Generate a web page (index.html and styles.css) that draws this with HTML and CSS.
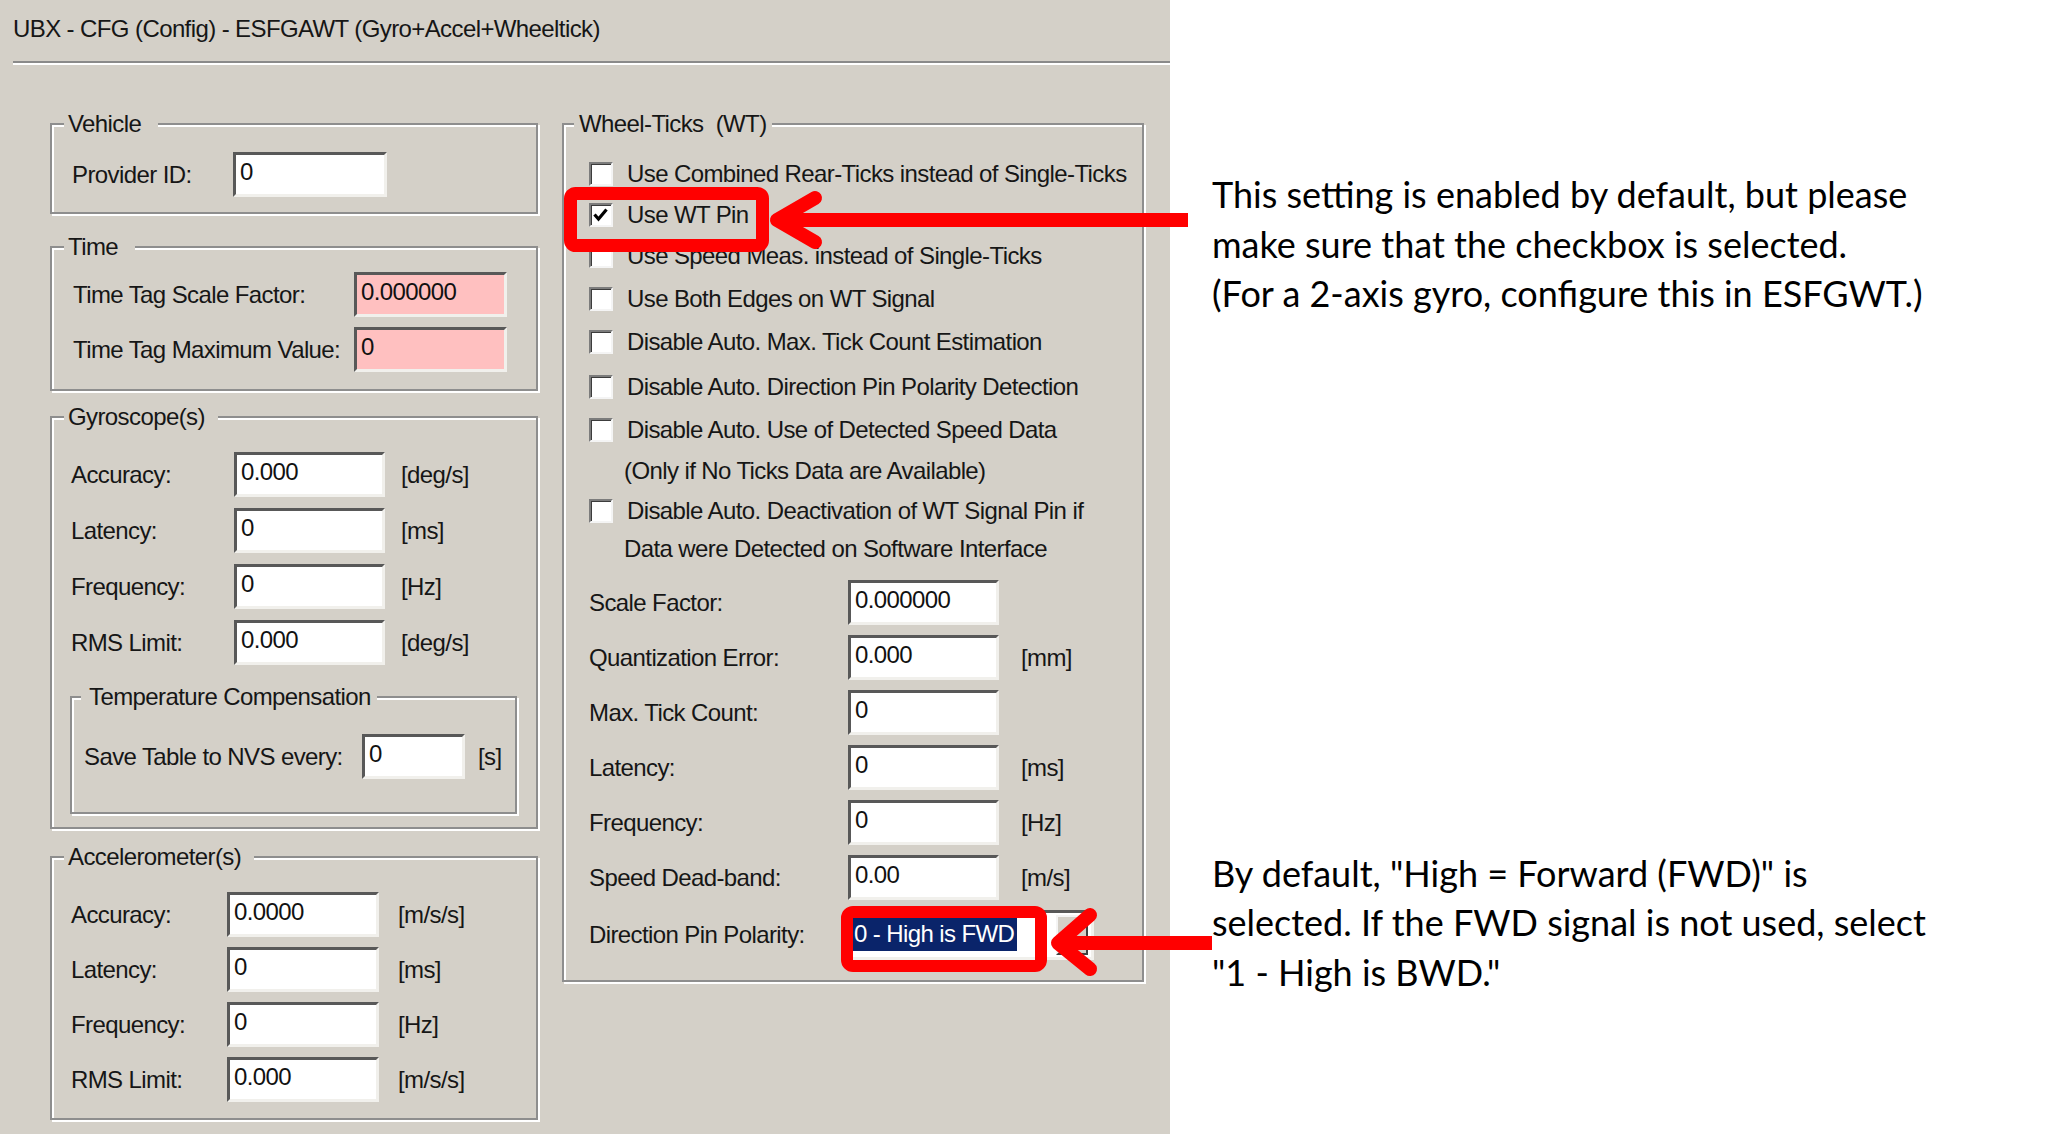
FILE: index.html
```html
<!DOCTYPE html>
<html lang="en">
<head>
<meta charset="utf-8">
<title>UBX - CFG (Config) - ESFGAWT</title>
<link rel="stylesheet" href="styles.css">
</head>
<body>
<div class="page">
  <main class="dialog">
    <header class="head">
      <h1 class="title">UBX - CFG (Config) - ESFGAWT (Gyro+Accel+Wheeltick)</h1>
      <div class="sep"></div>
    </header>
    <div class="cols">
      <div class="col-left">
        <fieldset class="grp grp-vehicle">
          <legend class="lg lg-wide">Vehicle</legend>
          <div class="rows">
            <div class="row"><span class="lbl">Provider ID:</span><span class="inp">0</span></div>
          </div>
        </fieldset>

        <fieldset class="grp grp-time">
          <legend class="lg lg-wide">Time</legend>
          <div class="rows">
            <div class="row"><span class="lbl">Time Tag Scale Factor:</span><span class="inp inp-pink">0.000000</span></div>
            <div class="row"><span class="lbl">Time Tag Maximum Value:</span><span class="inp inp-pink">0</span></div>
          </div>
        </fieldset>

        <fieldset class="grp grp-gyro">
          <legend class="lg lg-mid">Gyroscope(s)</legend>
          <div class="rows">
            <div class="row"><span class="lbl">Accuracy:</span><span class="inp">0.000</span><span class="unit">[deg/s]</span></div>
            <div class="row"><span class="lbl">Latency:</span><span class="inp">0</span><span class="unit">[ms]</span></div>
            <div class="row"><span class="lbl">Frequency:</span><span class="inp">0</span><span class="unit">[Hz]</span></div>
            <div class="row"><span class="lbl">RMS Limit:</span><span class="inp">0.000</span><span class="unit">[deg/s]</span></div>
          </div>
          <fieldset class="grp grp-temp">
            <legend class="lg lg-temp">Temperature Compensation</legend>
            <div class="rows">
              <div class="row"><span class="lbl">Save Table to NVS every:</span><span class="inp">0</span><span class="unit">[s]</span></div>
            </div>
          </fieldset>
        </fieldset>

        <fieldset class="grp grp-accel">
          <legend class="lg lg-mid">Accelerometer(s)</legend>
          <div class="rows">
            <div class="row"><span class="lbl">Accuracy:</span><span class="inp">0.0000</span><span class="unit">[m/s/s]</span></div>
            <div class="row"><span class="lbl">Latency:</span><span class="inp">0</span><span class="unit">[ms]</span></div>
            <div class="row"><span class="lbl">Frequency:</span><span class="inp">0</span><span class="unit">[Hz]</span></div>
            <div class="row"><span class="lbl">RMS Limit:</span><span class="inp">0.000</span><span class="unit">[m/s/s]</span></div>
          </div>
        </fieldset>
      </div>

      <div class="col-right">
        <fieldset class="grp grp-wt">
          <legend class="lg lg-wt">Wheel-Ticks&nbsp; (WT)</legend>
          <div class="checks">
            <div class="ck"><span class="cb"></span><span>Use Combined Rear-Ticks instead of Single-Ticks</span></div>
            <div class="ck"><span class="cb"><svg viewBox="0 0 20 20" width="20" height="20"><path d="M3.5 9.5 L7.5 14 L15.5 4.5" fill="none" stroke="#000" stroke-width="3.2"/></svg></span><span>Use WT Pin</span></div>
            <div class="ck"><span class="cb"></span><span>Use Speed Meas. instead of Single-Ticks</span></div>
            <div class="ck"><span class="cb"></span><span>Use Both Edges on WT Signal</span></div>
            <div class="ck"><span class="cb"></span><span>Disable Auto. Max. Tick Count Estimation</span></div>
            <div class="ck"><span class="cb"></span><span>Disable Auto. Direction Pin Polarity Detection</span></div>
            <div class="ck"><span class="cb"></span><span>Disable Auto. Use of Detected Speed Data</span></div>
            <div class="ck ck-cont"><span>(Only if No Ticks Data are Available)</span></div>
            <div class="ck"><span class="cb"></span><span>Disable Auto. Deactivation of WT Signal Pin if</span></div>
            <div class="ck ck-cont"><span>Data were Detected on Software Interface</span></div>
          </div>
          <div class="rows">
            <div class="row"><span class="lbl">Scale Factor:</span><span class="inp">0.000000</span></div>
            <div class="row"><span class="lbl">Quantization Error:</span><span class="inp">0.000</span><span class="unit">[mm]</span></div>
            <div class="row"><span class="lbl">Max. Tick Count:</span><span class="inp">0</span></div>
            <div class="row"><span class="lbl">Latency:</span><span class="inp">0</span><span class="unit">[ms]</span></div>
            <div class="row"><span class="lbl">Frequency:</span><span class="inp">0</span><span class="unit">[Hz]</span></div>
            <div class="row"><span class="lbl">Speed Dead-band:</span><span class="inp">0.00</span><span class="unit">[m/s]</span></div>
            <div class="row row-combo"><span class="lbl">Direction Pin Polarity:</span>
              <span class="combo"><span class="sel">0 - High is FWD</span><span class="drop"></span></span>
            </div>
          </div>
        </fieldset>
      </div>
    </div>
  </main>

  <aside class="notes">
    <p class="note note-1">This setting is enabled by default, but please<br>make sure that the checkbox is selected.<br>(For a 2-axis gyro, configure this in ESFGWT.)</p>
    <p class="note note-2">By default, "High = Forward (FWD)" is<br>selected. If the FWD signal is not used, select<br>"1 - High is BWD."</p>
  </aside>
</div>

<svg class="marks" width="2048" height="1134" viewBox="0 0 2048 1134" aria-hidden="true">
  <g fill="none" stroke="#ff0000" stroke-linejoin="round">
    <rect x="570.5" y="193.5" width="192" height="52" rx="5" stroke-width="13"/>
    <line x1="782" y1="220" x2="1188" y2="220" stroke-width="14"/>
    <polyline points="815,198 777,220 815,242" stroke-width="14" stroke-linecap="round"/>
    <rect x="847" y="912" width="194" height="54" rx="6" stroke-width="12"/>
    <line x1="1062" y1="943" x2="1212" y2="943" stroke-width="14"/>
    <polyline points="1090,915 1058,943 1090,969" stroke-width="14" stroke-linecap="round"/>
  </g>
</svg>
</body>
</html>
```

FILE: styles.css
```css
* { box-sizing: border-box; }
html, body { margin: 0; padding: 0; }
body {
  width: 2048px;
  height: 1134px;
  overflow: hidden;
  background: #ffffff;
  position: relative;
  font-family: "Liberation Sans", Arial, sans-serif;
}
.page { display: flex; height: 1134px; }

/* ---------- dialog ---------- */
.dialog {
  width: 1170px;
  flex: none;
  background: #d4d0c8;
  color: #161616;
  font-size: 24px;
  line-height: 28px;
  letter-spacing: -0.6px;
}
.head { padding: 15px 0 0 13px; }
.title {
  margin: 0;
  font-size: 24px;
  font-weight: normal;
  line-height: 28px;
  white-space: nowrap;
}
.sep {
  margin-top: 18px;
  height: 4px;
  border-top: 2px solid #8a8a8a;
  border-bottom: 2px solid #ffffff;
}
.cols {
  display: flex;
  gap: 24px;
  margin-top: 45px;
  padding-left: 50px;
}
.col-left { width: 488px; display: flex; flex-direction: column; }
.col-right { width: 582px; }

/* group boxes */
.grp {
  margin: 0;
  padding: 0;
  min-inline-size: 0;
  border: 2px solid #8e8e8e;
  box-shadow: inset 2px 2px 0 #ffffff, 2px 2px 0 #ffffff;
}
.lg {
  margin-left: 12px;
  padding: 0 4px;
  height: 28px;
  line-height: 28px;
  background: #d4d0c8;
  white-space: nowrap;
}
.lg-wide { padding-right: 17px; }
.lg-mid { padding-right: 13px; }
.lg-temp { margin-left: 9px; padding: 0 6px 0 8px; }
.lg-wt { margin-left: 10px; padding: 0 5px 0 5px; }

.rows { display: flex; flex-direction: column; }
.row { display: flex; align-items: center; height: 45px; white-space: nowrap; }
.lbl { flex: none; }
.unit { flex: none; }

.inp {
  display: block;
  flex: none;
  height: 45px;
  background: #ffffff;
  border: 3px solid;
  border-color: #585858 #f1f0ec #f1f0ec #585858;
  padding: 3px 4px;
  line-height: 28px;
  color: #111;
}
.inp-pink { background: #ffc0c0; }

/* Vehicle */
.grp-vehicle { height: 104px; }
.grp-vehicle .rows { padding: 14px 0 0 20px; }
.grp-vehicle .lbl { width: 161px; }
.grp-vehicle .inp { width: 154px; }

/* Time */
.grp-time { height: 158px; margin-top: 19px; }
.grp-time .rows { padding: 11px 0 0 21px; gap: 10px; }
.grp-time .lbl { width: 281px; }
.grp-time .inp { width: 153px; }

/* Gyro */
.grp-gyro { height: 426px; margin-top: 12px; }
.grp-gyro > .rows { padding: 21px 0 0 19px; gap: 11px; }
.grp-gyro > .rows .lbl { width: 163px; }
.grp-gyro > .rows .inp { width: 151px; }
.grp-gyro > .rows .unit { margin-left: 16px; }

.grp-temp { width: 447px; height: 131px; margin: 18px 0 0 18px; }
.grp-temp .rows { padding: 23px 0 0 12px; }
.grp-temp .lbl { width: 278px; }
.grp-temp .inp { width: 103px; }
.grp-temp .unit { margin-left: 13px; }

/* Accel */
.grp-accel { height: 277px; margin-top: 14px; }
.grp-accel .rows { padding: 21px 0 0 19px; gap: 10px; }
.grp-accel .lbl { width: 156px; }
.grp-accel .inp { width: 152px; }
.grp-accel .unit { margin-left: 19px; }

/* Wheel ticks */
.grp-wt { height: 872px; }
.checks { padding: 16px 0 0 25px; display: flex; flex-direction: column; }
.ck { display: flex; align-items: center; height: 42px; white-space: nowrap; }
.ck:nth-child(1) { height: 40px; }
.ck:nth-child(2) { height: 41px; }
.ck:nth-child(3) { height: 42px; }
.ck:nth-child(4) { height: 43px; }
.ck:nth-child(5) { height: 44px; }
.ck:nth-child(6) { height: 45px; }
.ck:nth-child(7) { height: 42px; }
.ck:nth-child(8) { height: 40px; }
.ck:nth-child(9) { height: 39px; }
.ck:nth-child(10) { height: 38px; }
.ck-cont { padding-left: 35px; }
.cb {
  flex: none;
  width: 24px;
  height: 24px;
  margin-right: 14px;
  background: #ffffff;
  border: 2px solid;
  border-color: #7c7c7c #f4f4f4 #f4f4f4 #7c7c7c;
  box-shadow: inset 1px 1px 0 #3c3c3c;
  display: flex;
  align-items: center;
  justify-content: center;
}
.cb svg { display: block; }
.grp-wt .rows { padding: 12px 0 0 25px; gap: 10px; }
.grp-wt .lbl { width: 259px; }
.grp-wt .inp { width: 151px; }
.grp-wt .unit { margin-left: 22px; }
.row-combo { height: 50px; }

.combo {
  display: flex;
  align-items: flex-start;
  width: 246px;
  height: 50px;
  background: #ffffff;
  border: 3px solid;
  border-color: #585858 #f1f0ec #f1f0ec #585858;
  padding: 4px 3px 4px 1px;
}
.sel {
  display: block;
  height: 34px;
  line-height: 34px;
  padding: 0 3px 0 2px;
  background: #0a246a;
  color: #ffffff;
}
.drop {
  margin-left: auto;
  width: 32px;
  height: 40px;
  margin-top: -2px;
  background: #d4d0c8;
  border: 2px solid;
  border-color: #f4f4f4 #404040 #404040 #f4f4f4;
}

/* ---------- notes ---------- */
.notes {
  flex: 1;
  padding-left: 42px;
  font-family: Lato, "Liberation Sans", sans-serif;
  font-size: 36px;
  line-height: 49.5px;
  color: #000;
}
.note { margin: 0; white-space: nowrap; }
.note-1 { margin-top: 170px; }
.note-2 { margin-top: 530px; }

/* ---------- red annotation overlay ---------- */
.marks {
  position: absolute;
  left: 0;
  top: 0;
  pointer-events: none;
}
```
